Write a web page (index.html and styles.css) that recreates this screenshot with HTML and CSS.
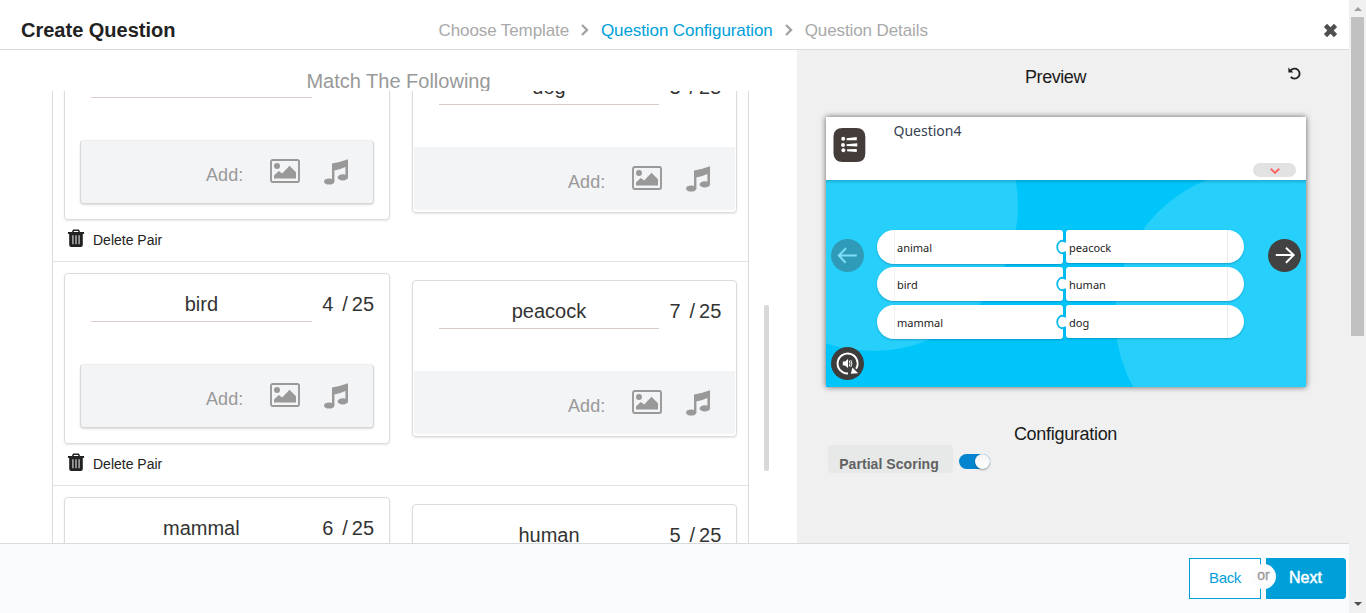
FILE: index.html
```html
<!DOCTYPE html>
<html lang="en">
<head>
<meta charset="utf-8">
<title>Create Question</title>
<link rel="stylesheet" href="styles.css">
</head>
<body>
<svg class="sprite" aria-hidden="true">
  <symbol id="i-image" viewBox="0 0 30 24">
    <rect x="1" y="1" width="28" height="22" rx="1.8" fill="none" stroke="currentColor" stroke-width="1.9"/>
    <circle cx="7" cy="7" r="3" fill="currentColor"/>
    <path d="M4 19.6v-3l4.800-4.600 3.400 2.500 7.300-7.800 6.500 6.500v6.4z" fill="currentColor"/>
  </symbol>
  <symbol id="i-music" viewBox="0 0 24 26">
    <path d="M8 4.6q8-1.500 16-4.400v18h-2.600V8q-5 2.400-11 3.400V22H8z" fill="currentColor"/>
    <ellipse cx="5.200" cy="22.500" rx="5.200" ry="3.100" fill="currentColor"/>
    <ellipse cx="18.800" cy="18.400" rx="5.200" ry="3.100" fill="currentColor"/>
  </symbol>
  <symbol id="i-trash" viewBox="0 0 16 18">
    <path d="M4.500 3.500 5.500 1.200h5l1 2.300" fill="none" stroke="currentColor" stroke-width="1.500"/>
    <path d="M0 3h16v2H0z" fill="currentColor"/>
    <path d="M1.200 4.500h13.600V16q0 2-2 2H3.200q-2 0-2-2z" fill="currentColor"/>
    <path d="M4.900 6.200v9M8 6.200v9M11.100 6.200v9" stroke="#c4c4c4" stroke-width="1.300"/>
  </symbol>
  <symbol id="i-knob" viewBox="0 0 11 16">
    <path d="M11 3H9C4.500.600 1 4 1 8s3.500 7.400 8 5h2z" fill="#fff"/>
    <path d="M10 2.600H9C4.500 0 1.200 4 1.200 8s3.300 8 7.800 5.400h1" fill="none" stroke="#0bb9ea" stroke-width="1.800"/>
  </symbol>
</svg>

<div class="page">
  <div class="app">
    <header class="top">
      <h1>Create Question</h1>
      <nav class="steps">
        <span>Choose Template</span>
        <svg class="chev" viewBox="0 0 8 12"><path d="M1 1l5 5-5 5"/></svg>
        <span class="on">Question Configuration</span>
        <svg class="chev" viewBox="0 0 8 12"><path d="M1 1l5 5-5 5"/></svg>
        <span>Question Details</span>
      </nav>
      <svg class="close" viewBox="0 0 14 14"><path d="M2.300 2.300l9.400 9.400M11.700 2.300l-9.400 9.400"/></svg>
    </header>

    <main class="body">
      <section class="editor">
        <h2>Match The Following</h2>
        <div class="viewport">
          <div class="list">
            <div class="pair">
              <div class="cards">
                <div class="card left">
                  <div class="field"><span class="value">animal</span><span class="count">6</span><span class="max">/ 25</span></div>
                  <div class="media"><span>Add:</span><svg class="img"><use href="#i-image"/></svg><svg class="mus"><use href="#i-music"/></svg></div>
                </div>
                <div class="card right">
                  <div class="field"><span class="value">dog</span><span class="count">3</span><span class="max">/ 25</span></div>
                  <div class="media"><span>Add:</span><svg class="img"><use href="#i-image"/></svg><svg class="mus"><use href="#i-music"/></svg></div>
                </div>
              </div>
              <div class="delete"><svg><use href="#i-trash"/></svg><span>Delete Pair</span></div>
            </div>
            <div class="pair">
              <div class="cards">
                <div class="card left">
                  <div class="field"><span class="value">bird</span><span class="count">4</span><span class="max">/ 25</span></div>
                  <div class="media"><span>Add:</span><svg class="img"><use href="#i-image"/></svg><svg class="mus"><use href="#i-music"/></svg></div>
                </div>
                <div class="card right">
                  <div class="field"><span class="value">peacock</span><span class="count">7</span><span class="max">/ 25</span></div>
                  <div class="media"><span>Add:</span><svg class="img"><use href="#i-image"/></svg><svg class="mus"><use href="#i-music"/></svg></div>
                </div>
              </div>
              <div class="delete"><svg><use href="#i-trash"/></svg><span>Delete Pair</span></div>
            </div>
            <div class="pair">
              <div class="cards">
                <div class="card left">
                  <div class="field"><span class="value">mammal</span><span class="count">6</span><span class="max">/ 25</span></div>
                </div>
                <div class="card right">
                  <div class="field"><span class="value">human</span><span class="count">5</span><span class="max">/ 25</span></div>
                </div>
              </div>
            </div>
          </div>
          <div class="thumb"></div>
        </div>
      </section>

      <aside class="side">
        <div class="side-head">
          <h3 class="preview-title">Preview</h3>
          <svg class="undo" viewBox="0 0 13 13"><path d="M2.600 3.600A5 5 0 1 1 2.800 9.900" fill="none" stroke="#222" stroke-width="1.900"/><path d="M.4.400v5h5z" fill="#222"/></svg>
        </div>
        <div class="stage">
          <div class="q-head">
            <svg class="q-icon" viewBox="0 0 34 36">
              <path d="M10 .5h14q9 0 9.300 9v17q0 9-9 9H10q-9 0-9.500-9v-17Q.5.500 10 .500z" fill="#443c39"/>
              <g fill="#fff"><circle cx="10.500" cy="11.600" r="2"/><circle cx="10.300" cy="18" r="2"/><circle cx="10.700" cy="23.400" r="2"/>
              <path d="M14 11 24.500 9.700v3.500L14 13.100zM14 17.100l11-.8v3.300l-11-.6zM14.500 22.500l10-.5v3.300l-10-.8z"/></g>
            </svg>
            <span class="q-text">Question4</span>
            <span class="q-drop"><svg viewBox="0 0 10 6"><path d="M.8.800 5 4.900 9.200.800"/></svg></span>
          </div>
          <div class="q-body">
            <svg class="scene" viewBox="0 0 480 207"><circle cx="47" cy="26" r="145"/><circle cx="436" cy="136" r="147"/></svg>
            <div class="controls">
              <svg class="round prev" viewBox="0 0 34 34"><circle cx="17" cy="17" r="17" fill="#309bb9"/><path d="M26.500 17H8M15.500 9.500 8 17l7 7.500" fill="none" stroke="#7fdff8" stroke-width="2"/></svg>
              <svg class="round" viewBox="0 0 34 34"><circle cx="17" cy="17" r="17" fill="#3d3d3d"/><path d="M17.500 27.300A10.300 10.300 0 1 1 25.800 22.500" fill="none" stroke="#fff" stroke-width="2"/><path d="M20.500 27.500l1.500-6.500 6 6z" fill="#fff"/><path d="M12.200 15h2.300l3-2.600v9.200l-3-2.600h-2.300z" fill="#fff"/><path d="M18.800 14q1.500 3 0 6M20.500 13.500q2 3.500 0 7" fill="none" stroke="#fff"/></svg>
            </div>
            <div class="rows">
              <div class="row"><span class="piece a">animal</span><span class="piece b">peacock</span><svg class="knob"><use href="#i-knob"/></svg></div>
              <div class="row"><span class="piece a">bird</span><span class="piece b">human</span><svg class="knob"><use href="#i-knob"/></svg></div>
              <div class="row"><span class="piece a">mammal</span><span class="piece b">dog</span><svg class="knob"><use href="#i-knob"/></svg></div>
            </div>
            <svg class="round next" viewBox="0 0 34 34"><circle cx="17" cy="17" r="17" fill="#424242"/><path d="M8 16.500h18.500M18.500 9l8 7.500-8 8" fill="none" stroke="#fff" stroke-width="2"/></svg>
          </div>
        </div>
        <h3 class="config-title">Configuration</h3>
        <div class="config">
          <span class="label">Partial Scoring</span>
          <span class="toggle"><i></i></span>
        </div>
      </aside>
    </main>

    <footer class="foot">
      <span class="btn back">Back</span>
      <span class="btn next-btn">Next</span>
      <span class="or">or</span>
    </footer>
  </div>
  <div class="scrollbar">
    <svg class="up" viewBox="0 0 8 4"><path d="M0 4 4 0l4 4z" fill="#a0a0a0"/></svg>
    <div class="bar"></div>
    <svg class="down" viewBox="0 0 8 4"><path d="M0 0l4 4 4-4z" fill="#505050"/></svg>
  </div>
</div>
</body>
</html>
```
FILE: styles.css
```css
* { box-sizing: border-box; }
body { margin: 0; font-family: "Liberation Sans", Arial, sans-serif; color: #333; overflow: hidden; }
h1, h2, h3 { margin: 0; font-weight: normal; }
svg { display: block; flex: none; }
span { white-space: nowrap; }
.sprite { width: 0; height: 0; position: absolute; }

.page { display: flex; width: 1366px; height: 613px; }
.app { width: 1349px; display: flex; flex-direction: column; }

/* header */
.top { height: 50px; flex: none; border-bottom: 1px solid #dadada; display: flex; align-items: center; padding: 12px 11px 0 21px; }
h1 { font-size: 20px; line-height: 24px; font-weight: bold; color: #222; width: 417.500px; padding-bottom: 1px; }
.steps { display: flex; align-items: center; font-size: 17px; line-height: 20px; color: #a9a9a9; flex: 1; letter-spacing: -.1px; }
.steps .on { color: #009fda; }
.chev { width: 8px; height: 12px; margin: 0 12px 1px; fill: none; stroke: #a3a3a3; stroke-width: 2.4; }
.close { width: 15px; height: 15px; stroke: #505050; stroke-width: 4.2; fill: none; }

/* editor */
.body { height: 493px; flex: none; display: flex; overflow: hidden; }
.editor { width: 797px; display: flex; flex-direction: column; }
h2 { height: 41px; flex: none; overflow: hidden; padding-top: 19px; line-height: 24px; font-size: 20px; color: #999; text-align: center; }
.viewport { height: 452px; overflow: hidden; display: flex; padding-left: 52px; gap: 15px; }
.list { width: 697px; height: 900px; flex: none; margin-top: -53px; border: solid #dcdcdc; border-width: 0 1px; }
.thumb { width: 5px; height: 166px; margin-top: 214px; background: #d8d8d8; border-radius: 2px; }
.pair { height: 224px; border-bottom: 1px solid #e2e2e2; padding: 11px 11px 0; }
.cards { display: flex; gap: 22px; align-items: flex-start; }
.card { border: 1px solid #dcdcdc; border-radius: 4px; box-shadow: 0 1px 2px rgba(0,0,0,.1); display: flex; flex-direction: column; }
.card.left { width: 326px; height: 171px; padding: 13px 15px 0; }
.card.right { width: 325px; height: 157px; margin-top: 7px; padding: 13px 1px 1px; }
.field { display: flex; font-size: 20px; line-height: 34px; height: 35px; color: #333; }
.left .field { padding-left: 11px; }
.right .field { padding-left: 25px; }
.value { width: 221px; height: 35px; border-bottom: 1px solid #ddc8c8; text-align: center; }
.right .value { width: 220px; }
.count { width: 20px; margin-left: 10.500px; }
.max { word-spacing: -1.500px; }
.media { display: flex; background: #f3f4f6; color: #999; font-size: 18px; line-height: 24px; }
.left .media { height: 64px; margin-top: 42px; border: 1px solid #d8d8da; border-top-color: #eceef0; border-radius: 4px; box-shadow: 0 1px 2px rgba(0,0,0,.15); padding: 18px 0 0 125px; }
.right .media { height: 63px; margin-top: 42px; padding: 19px 0 0 154px; border-radius: 0 0 3px 3px; }
.media span { padding-top: 4px; width: 64px; letter-spacing: .1px; }
.media .img { width: 30px; height: 24px; }
.media .mus { width: 24px; height: 26px; margin-left: 24px; }
.delete { display: flex; align-items: center; font-size: 14px; line-height: 18px; color: #222; padding-left: 4px; margin-top: 7px; }
.delete svg { width: 16px; height: 18px; color: #222; margin-bottom: 1px; }
.delete span { margin: 4px 0 0 9px; }

/* preview */
.side { flex: 1; background: #f0f0f0; padding: 0 29px; }
.side-head { height: 67px; position: relative; }
h3 { font-size: 18px; line-height: 22px; color: #1a1a1a; text-align: center; }
.preview-title { padding: 16px 35px 0 0; letter-spacing: -.45px; }
.config-title { padding: 36px 15px 0 0; letter-spacing: -.3px; }
.undo { position: absolute; right: 19px; top: 17px; width: 13px; height: 13px; }
.stage { width: 480px; height: 270px; box-shadow: 0 0 6px rgba(0,0,0,.6); font-family: "Noto Sans", sans-serif; }
.q-head { height: 63px; background: #fff; display: flex; padding: 10px 10px 0 7px; }
.q-icon { width: 33px; height: 36px; }
.q-text { font-size: 14px; line-height: 20px; color: #36424f; margin: -6px 0 0 27.500px; flex: 1; }
.q-drop { width: 43px; height: 14px; margin-top: 36px; border-radius: 7px; background: #e2e2e2; display: flex; align-items: center; justify-content: center; }
.q-drop svg { width: 10px; height: 6px; margin-top: 1px; fill: none; stroke: #ff6262; stroke-width: 1.900; }
.q-body { height: 207px; background: #00c5fa; position: relative; display: flex; overflow: hidden; }
.q-body::after { content: ""; position: absolute; inset: 0 0 auto; height: 4px; background: linear-gradient(rgba(0,80,120,.28), rgba(0,80,120,0)); }
.scene { position: absolute; inset: 0; width: 480px; height: 207px; fill: #26d0fb; }
.controls, .rows, .next { position: relative; }
.controls { width: 51px; padding: 59px 0 0 5px; display: flex; flex-direction: column; gap: 75px; }
.round { width: 33px; height: 33px; }
.next { margin: 59px 0 0 24px; }
.rows { width: 367px; padding-top: 49.500px; display: flex; flex-direction: column; gap: 3.500px; }
.row { display: flex; gap: 2.500px; height: 34.200px; position: relative; }
.piece { background: #fff; box-shadow: 0 1px 2px rgba(0,70,110,.35); font-size: 11px; line-height: 35px; color: #1c1c1c; }
.a { width: 186px; border-radius: 17px 3px 3px 17px; padding-left: 20px; background: linear-gradient(90deg,#fff 17px,#f3f3f3 17px,#f3f3f3 18px,#fff 18px); }
.b { width: 178.500px; height: 33.500px; border-radius: 3px 17px 17px 3px; padding-left: 3.500px; background: linear-gradient(270deg,#fff 16px,#ebebeb 16px,#ebebeb 17px,#fff 17px); }
.knob { position: absolute; left: 179px; top: 9px; width: 11px; height: 16px; }
.config { display: flex; margin-left: 2px; }
.label { width: 125px; height: 28px; border-radius: 3px; background: #e7e9e9; color: #616161; font-size: 14px; font-weight: bold; line-height: 38px; letter-spacing: .05px; text-align: center; padding-right: 3px; overflow: hidden; }
.toggle { width: 31px; height: 15px; border-radius: 8px; background: #0584d0; margin: 9px 0 0 6px; display: flex; justify-content: flex-end; }
.toggle i { width: 15px; height: 15px; border-radius: 50%; background: linear-gradient(#f3f3f3,#fff); box-shadow: 0 1px 2px rgba(0,0,0,.35); }

/* footer */
.foot { height: 70px; border-top: 1px solid #d9dadb; background: #fafbfd; display: flex; justify-content: flex-end; gap: 5px; padding: 14px 3px 0; position: relative; }
.btn { height: 41px; line-height: 38px; text-align: center; border: 1px solid #009fda; font-size: 15px; }
.back { width: 72px; color: #009fda; background: #fff; letter-spacing: -.3px; }
.next-btn { width: 80px; color: #fff; background: #009fda; border-radius: 0 3px 3px 0; font-size: 16px; -webkit-text-stroke: .5px #fff; padding-right: 1px; }
.or { position: absolute; left: 1251px; top: 20px; width: 25px; height: 25px; border-radius: 50%; background: #fcfcfe; color: #999; font-size: 14px; line-height: 23px; text-align: center; -webkit-text-stroke: .3px #999; }

/* page scrollbar */
.scrollbar { width: 17px; background: #f1f1f1; display: flex; flex-direction: column; align-items: center; padding: 7px 0; }
.up, .down { width: 8px; height: 4px; }
.bar { width: 13px; height: 319px; margin-top: 6px; background: #c1c1c1; }
.down { margin-top: auto; }
```
